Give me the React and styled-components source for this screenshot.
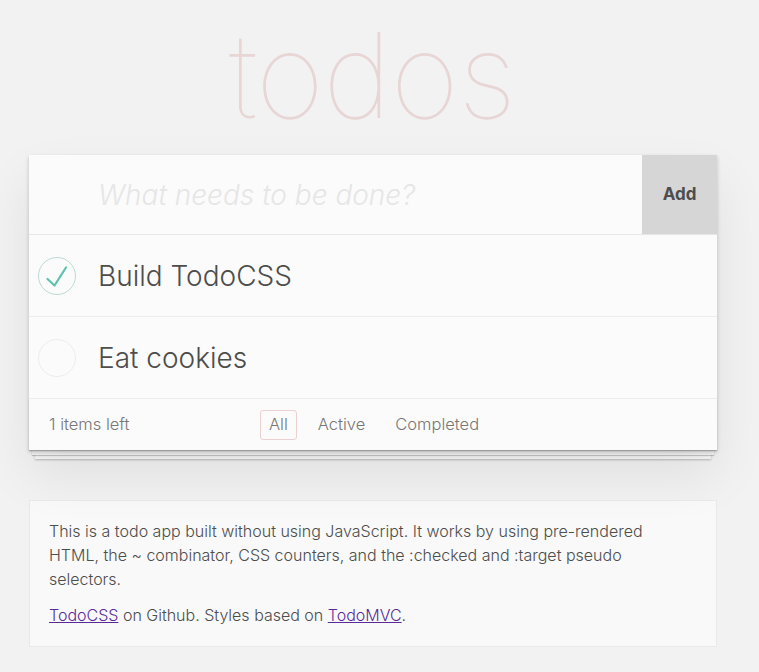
import React from "react";
import styled, { createGlobalStyle } from "styled-components";

const Global = createGlobalStyle`
  html, body { margin: 0; padding: 0; }
  body {
    background: #f2f2f2;
    font-family: "Helvetica Neue", Inter, "Liberation Sans", sans-serif;
    font-weight: 300;
    color: #4d4d4d;
    -webkit-font-smoothing: antialiased;
  }
`;

const Page = styled.div`
  width: 688px;
  margin: 0 0 0 29px;
  padding-bottom: 26px;
`;

const Title = styled.h1`
  margin: 0;
  height: 155px;
  text-align: center;
  font-size: 118px;
  font-weight: 100;
  line-height: 150px;
  color: rgba(175, 47, 47, 0.15);
  letter-spacing: -1px;
  padding-right: 2px;
  box-sizing: border-box;
`;

const Panel = styled.section`
  position: relative;
  background: #fbfbfb;
  box-shadow: 0 2px 4px rgba(0, 0, 0, 0.2), 0 25px 50px rgba(0, 0, 0, 0.08);
`;

const Header = styled.form`
  display: flex;
  height: 79px;
  border-bottom: 1px solid #e6e6e6;
`;

const NewTodo = styled.input`
  flex: 1;
  min-width: 0;
  border: 0;
  outline: none;
  background: transparent;
  padding: 0 0 0 69px;
  font-family: inherit;
  font-size: 28px;
  font-weight: 300;
  color: #4d4d4d;
  &::placeholder {
    font-style: italic;
    color: #e6e6e6;
  }
`;

const AddButton = styled.button`
  width: 75px;
  border: 0;
  background: #d6d6d6;
  font-family: inherit;
  font-size: 17px;
  font-weight: 700;
  color: #4d4d4d;
  padding: 0 0 2px;
`;

const List = styled.ul`
  list-style: none;
  margin: 0;
  padding: 0;
`;

const Item = styled.li`
  display: flex;
  align-items: center;
  height: 81px;
  border-bottom: 1px solid #ededed;
`;

const Check = styled.span`
  width: 40px;
  height: 40px;
  margin-left: 8px;
  display: flex;
  align-items: center;
  justify-content: center;
`;

const Label = styled.label`
  margin-left: 21px;
  font-size: 28px;
  font-weight: 300;
  color: #4d4d4d;
  padding-top: 1px;
`;

const Footer = styled.footer`
  position: relative;
  display: flex;
  align-items: center;
  height: 51px;
  padding: 0 20px;
  color: #777;
  font-size: 16.5px;
  &::before {
    content: "";
    position: absolute;
    left: 0;
    right: 0;
    bottom: 0;
    height: 50px;
    overflow: hidden;
    z-index: -1;
    box-shadow: 0 1px 1px rgba(0, 0, 0, 0.2), 0 8px 0 -3px #f6f6f6,
      0 9px 1px -3px rgba(0, 0, 0, 0.2), 0 15px 0 -6px #f6f6f6,
      0 16px 2px -6px rgba(0, 0, 0, 0.25);
  }
`;

const Count = styled.span`
  width: 211px;
  padding-bottom: 1px;
`;

const Filters = styled.ul`
  display: flex;
  gap: 12px;
  list-style: none;
  margin: 0;
  padding: 0;
`;

const Filter = styled.a`
  display: block;
  padding: 4px 8px 5px;
  border: 1px solid ${(p) => (p.$selected ? "rgba(175, 47, 47, 0.2)" : "transparent")};
  border-radius: 3px;
  color: #777;
  text-decoration: none;
  line-height: 19px;
`;

const Info = styled.div`
  margin-top: 50px;
  background: #f9f9f9;
  border: 1px solid #e9e9e9;
  padding: 18px 60px 19px 19px;
  font-size: 16px;
  line-height: 24px;
  color: #4d4d4d;
  p { margin: 0 0 12px; }
  p:last-child { margin: 0; }
  a { color: #5a2a9a; }
`;

const Circle = ({ done }) => (
  <svg width="40" height="40" viewBox="0 0 40 40">
    <circle cx="20" cy="20" r="18.5" fill="none" stroke={done ? "#bddad5" : "#ededed"} strokeWidth="1" />
    {done && (
      <polyline
        points="10.5,23 17.5,29.5 29,11.5"
        fill="none"
        stroke="#5dc2af"
        strokeWidth="2.2"
        strokeLinecap="round"
        strokeLinejoin="round"
      />
    )}
  </svg>
);

export default function App() {
  return (
    <>
      <Global />
      <Page>
        <Title>todos</Title>
        <Panel>
          <Header onSubmit={(e) => e.preventDefault()}>
            <NewTodo placeholder="What needs to be done?" />
            <AddButton type="submit">Add</AddButton>
          </Header>
          <List>
            <Item>
              <Check><Circle done /></Check>
              <Label>Build TodoCSS</Label>
            </Item>
            <Item>
              <Check><Circle /></Check>
              <Label>Eat cookies</Label>
            </Item>
          </List>
          <Footer>
            <Count>1 items left</Count>
            <Filters>
              <li><Filter href="#" $selected>All</Filter></li>
              <li><Filter href="#">Active</Filter></li>
              <li><Filter href="#">Completed</Filter></li>
            </Filters>
          </Footer>
        </Panel>
        <Info>
          <p>
            This is a todo app built without using JavaScript. It works by using pre-rendered
            HTML, the ~ combinator, CSS counters, and the :checked and :target pseudo
            selectors.
          </p>
          <p>
            <a href="#">TodoCSS</a> on Github. Styles based on <a href="#">TodoMVC</a>.
          </p>
        </Info>
      </Page>
    </>
  );
}
